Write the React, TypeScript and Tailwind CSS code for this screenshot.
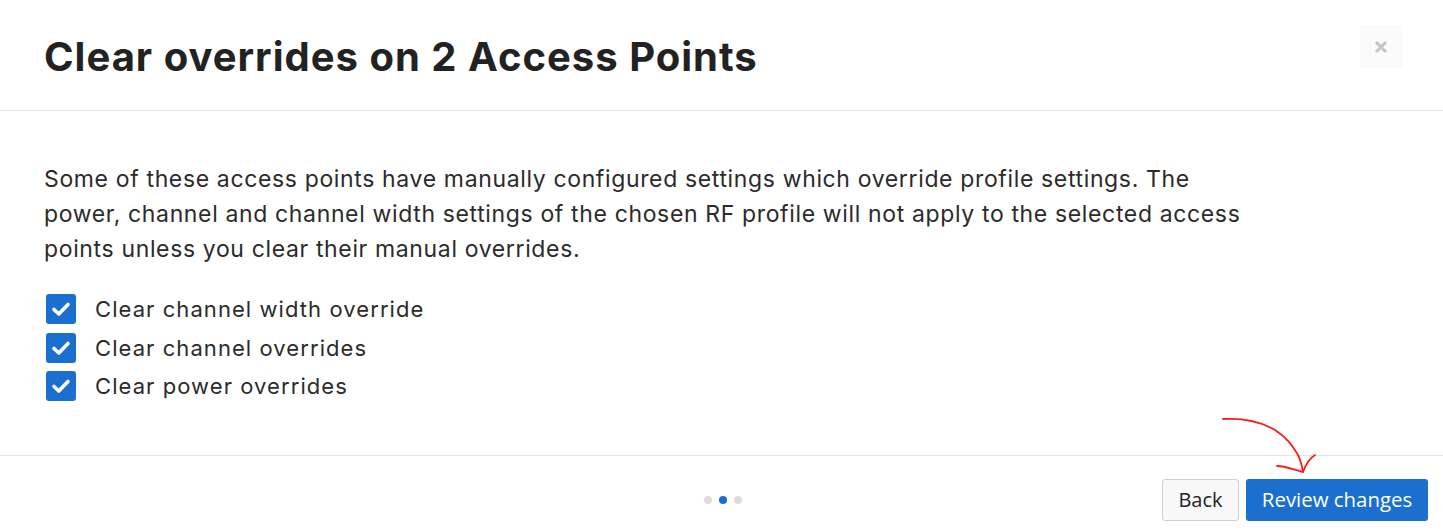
import React from "react";

function Check() {
  return (
    <span className="flex h-[30px] w-[30px] shrink-0 items-center justify-center rounded-[3px] bg-[#1a6fcf]">
      <svg width="20" height="16" viewBox="0 0 20 16" fill="none">
        <path d="M3 8.5 L7.8 13 L17 3.5" stroke="white" strokeWidth="3.6" strokeLinecap="round" strokeLinejoin="round" />
      </svg>
    </span>
  );
}

export default function App() {
  const items = ["Clear channel width override", "Clear channel overrides", "Clear power overrides"];
  return (
    <div className="relative flex h-[531px] w-[1443px] flex-col overflow-hidden bg-white text-[#262626]" style={{ fontFamily: "Inter, 'Noto Sans', sans-serif" }}>
      <div className="flex h-[111px] shrink-0 items-start justify-between border-b border-[#e4e4e4] pl-[44px] pr-[41px]">
        <h1 className="mt-[31px] text-[40px] font-bold leading-[52px] tracking-[1px] text-[#222]">
          Clear overrides on 2 Access Points
        </h1>
        <button className="mt-[25px] flex h-[43px] w-[42px] items-center justify-center bg-[#fafafa]">
          <svg width="14" height="14" viewBox="0 0 14 14">
            <path d="M2 2 L12 12 M12 2 L2 12" stroke="#c4c4c4" strokeWidth="3" />
          </svg>
        </button>
      </div>
      <div className="flex-1 border-b border-[#e4e4e4] pl-[44px] pt-[51px]">
        <p className="w-[1215px] text-[23px] leading-[35px] tracking-[0.64px] text-[#2b2b2b]">
          Some of these access points have manually configured settings which override profile settings. The power, channel and channel width settings of the chosen RF profile will not apply to the selected access points unless you clear their manual overrides.
        </p>
        <div className="mt-[27px] flex flex-col gap-[8.5px] pl-[2px]">
          {items.map((t) => (
            <label key={t} className="flex items-center gap-[19px] text-[22px] leading-[30px] tracking-[1.07px] text-[#2b2b2b]">
              <Check />
              <span>{t}</span>
            </label>
          ))}
        </div>
      </div>
      <div className="relative flex h-[75px] shrink-0 items-center justify-end gap-[7px] pr-[15px]">
        <div className="absolute left-[704px] top-[40px] flex gap-[7px]">
          <span className="h-[8px] w-[8px] rounded-full bg-[#dcdcdc]" />
          <span className="h-[8px] w-[8px] rounded-full bg-[#1a6fcf]" />
          <span className="h-[8px] w-[8px] rounded-full bg-[#dcdcdc]" />
        </div>
        <button className="mt-[12px] h-[42px] w-[77px] rounded-[3px] border border-[#cfcfcf] bg-[#f8f8f8] text-[20px] text-[#222]" style={{ fontFamily: "'Open Sans', sans-serif" }}>
          Back
        </button>
        <button className="mt-[12px] h-[42px] w-[182px] rounded-[3px] bg-[#1a6fcf] text-[20.4px] text-white" style={{ fontFamily: "'Open Sans', sans-serif" }}>
          Review changes
        </button>
      </div>
      <svg className="pointer-events-none absolute left-0 top-0" width="1443" height="531" viewBox="0 0 1443 531" fill="none">
        <path d="M1223 419 C1245 418 1262 422 1275 430 C1290 440 1293 447 1298 455 C1301 461 1302 466 1303 472" stroke="#ff1a1a" strokeWidth="1.8" strokeLinecap="round" />
        <path d="M1277 466 C1286 466 1294 470 1303 472 M1303 472 C1306 464 1310 458 1315 455" stroke="#ff1a1a" strokeWidth="1.8" strokeLinecap="round" />
      </svg>
    </div>
  );
}
